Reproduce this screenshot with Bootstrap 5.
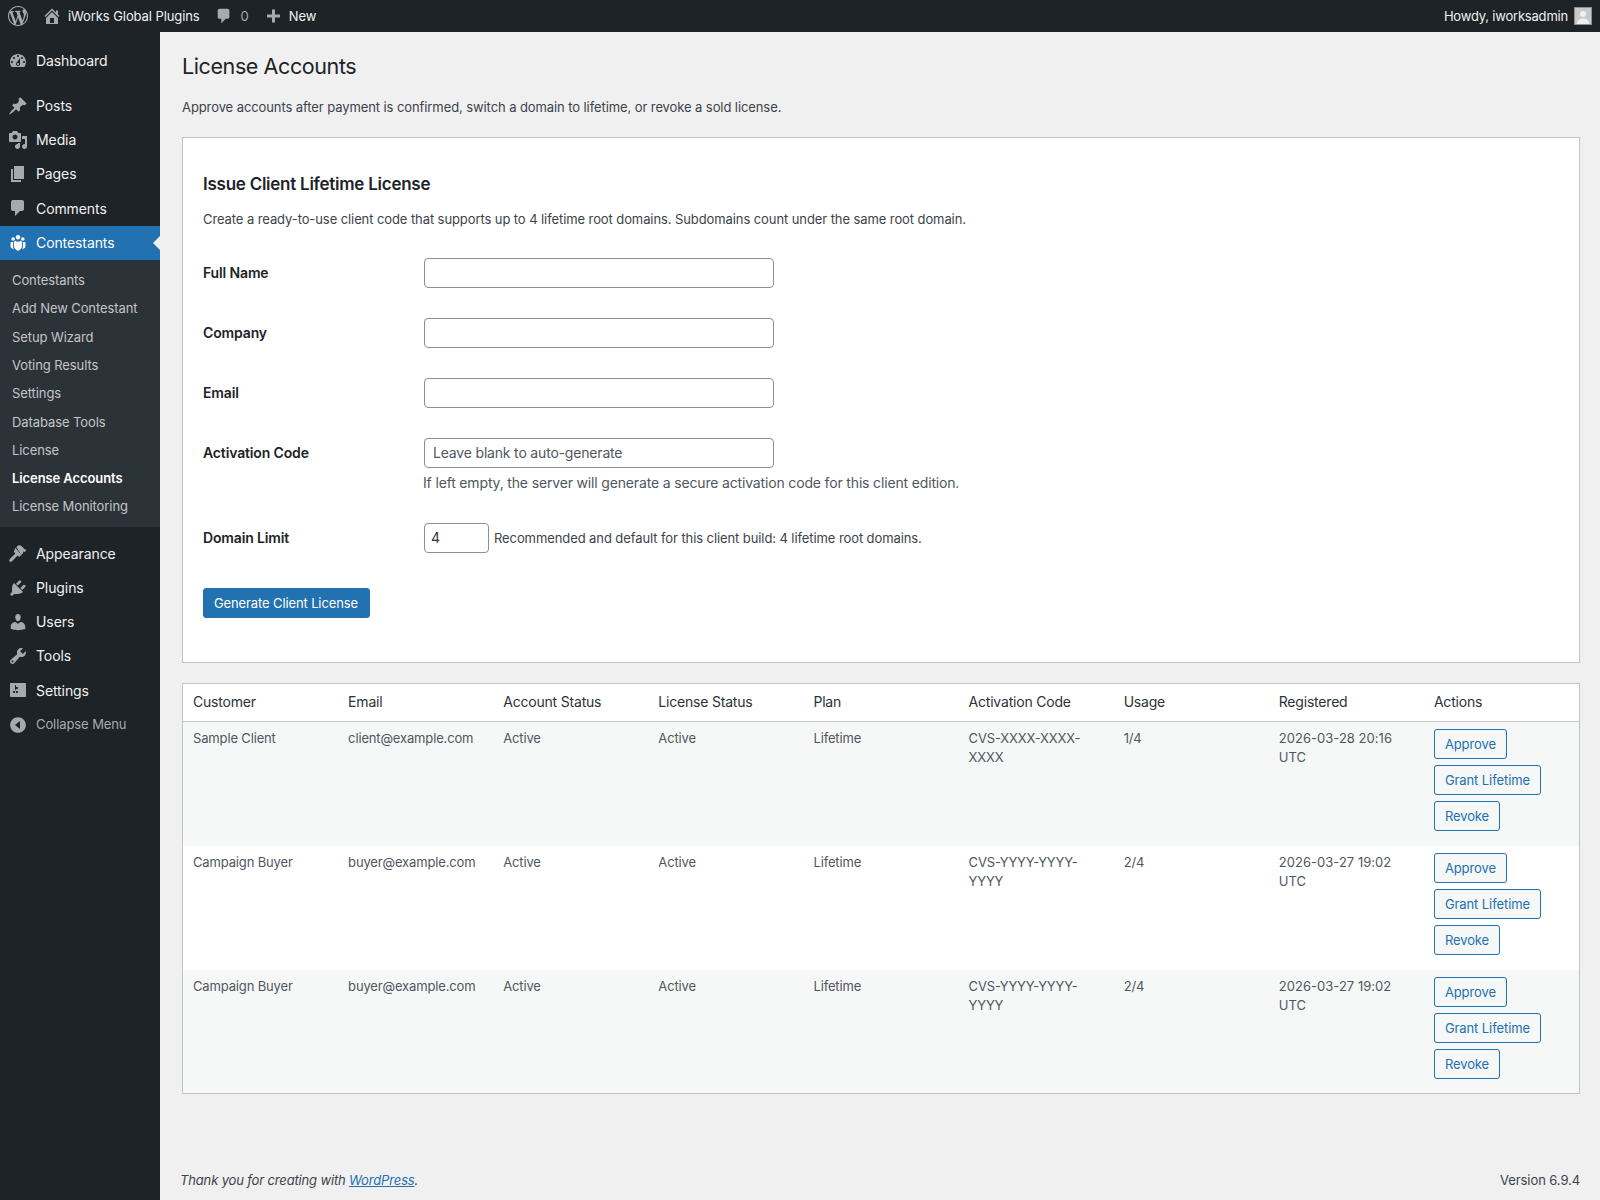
<!DOCTYPE html>
<html lang="en">
<head>
<meta charset="utf-8">
<title>License Accounts</title>
<link href="https://cdn.jsdelivr.net/npm/bootstrap@5.3.0/dist/css/bootstrap.min.css" rel="stylesheet">
<style>
body{font-family:Inter,"Liberation Sans",sans-serif;font-size:13px;line-height:1.4;color:#3c434a;background:#f0f0f1;min-height:1200px;letter-spacing:-.09px}
a{text-decoration:none}
.topbar{height:32px;background:#1d2327;color:#f0f0f1;font-size:13px}
.topbar svg{fill:#a7aaad;display:block}
.tb-muted{color:#a7aaad}
.tb-howdy{letter-spacing:-.2px}
.avatar-box{width:18px;height:18px;background:#c9c9c9;border:1px solid #8c8f94;overflow:hidden;margin:0 8px 0 6px}
.avatar-box svg{fill:#f0f0f0}
.shell{min-height:1168px}
.wpside{width:160px;flex:0 0 160px;background:#1d2327;padding-top:12px}
.wpside svg{width:20px;height:20px;fill:#a7aaad;flex:none}
.mitem{height:34.15px;padding-left:8px;gap:8px;color:#f0f0f1;font-size:14px}
.mitem-tall{height:34.3px}
.mitem-gap{margin-top:10.3px}
.mitem-current{background:#2271b1;color:#fff;position:relative}
.wpside .mitem-current svg{fill:#fff}
.mitem-current::after{content:"";position:absolute;right:0;top:10px;border:7px solid transparent;border-right-color:#f0f0f1;border-left-width:0}
.mitem-muted{color:#a7aaad;font-size:13px}
.submenu{background:#2c3338;padding:6.3px 0 6px;margin-bottom:10px}
.subitem{height:28.3px;padding-left:12px;color:#c3c4c7;font-size:13px}
.subitem-now{color:#fff;font-weight:600}
.wpmain{padding:0 20px 0 22px;min-width:0}
.page-title{font-size:21.5px;font-weight:400;color:#1d2327;line-height:28px;margin:20px 0 0;letter-spacing:-.4px}
.page-intro{margin:17px 0 0;line-height:20px}
.panel{background:#fff;border:1px solid #c3c4c7;margin-top:20px;padding:25px 20px 44px}
.panel-title{font-size:17px;font-weight:600;color:#1d2327;line-height:24px;margin:9px 0 0;letter-spacing:-.25px}
.panel-intro{margin:13px 0 0;line-height:20px}
.frow{display:flex;align-items:center;margin-top:30px;color:#1d2327}
.frow-first{margin-top:29px}
.frow-limit{margin-top:30px}
.flabel{width:221px;flex:none;font-size:14px;font-weight:600;color:#1d2327;letter-spacing:-.14px}
.finput{width:350px;height:30px;border:1px solid #8c8f94;border-radius:4px;background:#fff;padding:0 8px 2px;font-size:14px;color:#2c3338;font-family:inherit;display:block;letter-spacing:-.18px}
.finput::placeholder{color:#50575e;opacity:1}
.fhint{margin:5px 0 0 220px;font-size:14px;line-height:20px;color:#50575e;letter-spacing:-.16px}
.fnum{width:65px;height:30px;border:1px solid #8c8f94;border-radius:4px;background:#fff;padding:0 6px 1px;font-size:14px;color:#2c3338;font-family:inherit}
.fnote{margin-left:5px;color:#3c434a}
.gen-btn{background:#2271b1;border:1px solid #2271b1;color:#fff;border-radius:3px;height:30px;padding:0 11px 0 10px;font-size:13px;line-height:28px;margin-top:35px;font-family:inherit;letter-spacing:-.12px}
.acct-wrap{border:1px solid #c3c4c7;background:#fff;margin-top:20px}
.acct{table-layout:fixed;width:100%;margin:0;font-size:13px;line-height:19px;color:#50575e}
.acct th{font-size:14px;font-weight:400;color:#2c3338;padding:7px 10px 9px;line-height:21px;border-bottom:1px solid #c3c4c7;background:#fff;letter-spacing:-.2px}
.acct td{padding:7px 10px 15px;vertical-align:top;border:0;background:transparent;color:#50575e;letter-spacing:-.15px}
.acct tbody tr:last-child td{padding-bottom:14px}
.acct td.reg-cell{letter-spacing:.03px}
.acct tbody tr:nth-child(odd){background:#f6f7f7}
.act-btn{display:block;width:max-content;border:1px solid #2271b1;border-radius:3px;color:#2271b1;background:#f6f7f7;height:30px;line-height:28px;padding:0 10px;margin-bottom:6px;font-size:13px;letter-spacing:-.09px}
.acct td .act-btn:last-child{margin-bottom:0}
.wpfoot{margin-top:auto;padding-bottom:11px;margin-left:-2px}
.wpfoot a{color:#2271b1;text-decoration:underline}
.wpfoot em{color:#3c434a;letter-spacing:-.15px}
.wpfoot span{margin-left:auto}
</style>
</head>
<body>
<div class="topbar d-flex align-items-center justify-content-between">
  <div class="d-flex align-items-center">
    <svg class="ms-2" width="20" height="20" viewBox="0 0 20 20"><path fill-rule="evenodd" d="M20 10c0-5.510-4.490-10-10-10C4.480 0 0 4.490 0 10c0 5.520 4.480 10 10 10 5.510 0 10-4.480 10-10zM7.780 15.370L4.370 6.220c.55-.02 1.170-.08 1.170-.08.5-.06.44-1.130-.06-1.110 0 0-1.450.11-2.370.11-.18 0-.37 0-.58-.01C4.120 2.690 6.890 1.050 10 1.050c2.330 0 4.470.87 6.070 2.380-.68-.11-1.650.39-1.650 1.580 0 .74.450 1.360.9 2.100.35.61.55 1.360.55 2.460 0 1.490-1.400 5-1.400 5l-3.030-8.370c.54-.02.82-.17.82-.17.5-.05.44-1.250-.06-1.220 0 0-1.440.12-2.380.12-.87 0-2.330-.12-2.330-.12-.5-.03-.56 1.200-.06 1.220l.92.08 1.260 3.410zM17.410 10c.24-.64.740-1.870.43-4.250.7 1.290 1.050 2.710 1.050 4.250 0 3.290-1.730 6.240-4.400 7.780.97-2.590 1.940-5.210 2.920-7.780zM6.100 18.090C3.120 16.650 1.110 13.530 1.110 10c0-1.300.23-2.480.72-3.590C3.250 10.300 4.670 14.200 6.100 18.090zm4.030-6.630l2.580 6.980c-.86.29-1.740.45-2.710.45-.81 0-1.610-.11-2.330-.33z"/></svg>
    <svg style="margin-left:14px" width="20" height="20" viewBox="0 0 20 20"><path fill-rule="evenodd" d="M16 8.500l1.530 1.530-1.060 1.060L10 4.620l-6.470 6.470-1.060-1.060L10 2.500l4 4v-2h2v4zm-6-2.460l6 5.990V18H4v-5.970zM12 17v-5H8v5h4z"/></svg>
    <span style="margin-left:6px">iWorks Global Plugins</span>
    <svg style="margin-left:15px" width="18" height="18" viewBox="0 0 20 20"><path d="M5 2h9c1.100 0 2 .9 2 2v7c0 1.100-.9 2-2 2h-2l-5 5v-5H5c-1.100 0-2-.9-2-2V4c0-1.100.9-2 2-2z"/></svg>
    <span class="tb-muted" style="margin-left:8px">0</span>
    <svg style="margin-left:14px" width="20" height="20" viewBox="0 0 20 20"><path d="M12 8.500h5v3h-5v5H9v-5H4v-3h5v-5h3z"/></svg>
    <span style="margin-left:6px">New</span>
  </div>
  <div class="d-flex align-items-center">
    <span class="tb-howdy">Howdy, iworksadmin</span>
    <div class="avatar-box"><svg width="16" height="16" viewBox="0 0 16 16"><circle cx="8" cy="6" r="3"/><path d="M2 16c0-4 3-5.500 6-5.500s6 1.500 6 5.500z"/></svg></div>
  </div>
</div>
<div class="shell d-flex">
  <nav class="wpside">
    <div class="mitem d-flex align-items-center"><svg viewBox="0 0 20 20"><path fill-rule="evenodd" d="M3.760 16h12.480c1.100-1.370 1.760-3.110 1.760-5 0-4.420-3.580-8-8-8s-8 3.580-8 8c0 1.890.66 3.630 1.760 5zM10 4c.55 0 1 .45 1 1s-.45 1-1 1-1-.45-1-1 .45-1 1-1zM6 6c.55 0 1 .45 1 1s-.45 1-1 1-1-.45-1-1 .45-1 1-1zm8 0c.55 0 1 .45 1 1s-.45 1-1 1-1-.45-1-1 .45-1 1-1zm-5.370 5.550L12 7v6c0 1.100-.9 2-2 2s-2-.9-2-2c0-.57.24-1.080.63-1.450zM4 10c.55 0 1 .45 1 1s-.45 1-1 1-1-.45-1-1 .45-1 1-1zm12 0c.55 0 1 .45 1 1s-.45 1-1 1-1-.45-1-1 .45-1 1-1zm-5 3c0-.55-.45-1-1-1s-1 .45-1 1 .45 1 1 1 1-.45 1-1z"/></svg>Dashboard</div>
    <div class="mitem mitem-tall mitem-gap d-flex align-items-center"><svg viewBox="0 0 20 20"><path d="M10.440 3.020l1.820-1.820 6.360 6.350-1.830 1.820c-1.050-.68-2.480-.57-3.410.36l-.75.75c-.92.93-1.040 2.350-.35 3.410l-1.830 1.820-2.410-2.410-2.800 2.790c-.42.42-3.380 2.710-3.800 2.290s1.860-3.390 2.280-3.810l2.790-2.790L4.100 9.360l1.830-1.820c1.050.69 2.480.57 3.400-.36l.75-.75c.93-.92 1.050-2.350.36-3.410z"/></svg>Posts</div>
    <div class="mitem mitem-tall d-flex align-items-center"><svg viewBox="0 0 20 20"><path fill-rule="evenodd" d="M13 11V4c0-.55-.45-1-1-1h-1.670L9 1H5L3.670 3H2c-.55 0-1 .45-1 1v7c0 .55.45 1 1 1h10c.55 0 1-.45 1-1zM7 4.500c1.380 0 2.500 1.120 2.500 2.500S8.380 9.500 7 9.500 4.500 8.380 4.500 7 5.620 4.500 7 4.500zM14 6h5v10.500c0 1.380-1.120 2.500-2.500 2.500S14 17.880 14 16.500s1.120-2.500 2.500-2.500c.17 0 .34.020.5.050V9h-3V6zm-4 8.050V13h2v3.500c0 1.380-1.120 2.500-2.500 2.500S7 17.880 7 16.500 8.120 14 9.500 14c.17 0 .34.020.5.050z"/></svg>Media</div>
    <div class="mitem mitem-tall d-flex align-items-center"><svg viewBox="0 0 20 20"><path d="M6 15V2h10v13H6zm-1 1h8v2H3V5h2v11z"/></svg>Pages</div>
    <div class="mitem mitem-tall d-flex align-items-center"><svg viewBox="0 0 20 20"><path d="M5 2h9c1.100 0 2 .9 2 2v7c0 1.100-.9 2-2 2h-2l-5 5v-5H5c-1.100 0-2-.9-2-2V4c0-1.100.9-2 2-2z"/></svg>Comments</div>
    <div class="mitem mitem-current d-flex align-items-center"><svg viewBox="0 0 20 20"><circle cx="10" cy="4.300" r="2.200"/><circle cx="5.200" cy="6" r="1.800"/><circle cx="14.800" cy="6" r="1.800"/><path d="M7.300 7.800c.8.600 1.700 1 2.700 1s1.900-.4 2.700-1c.9.300 1.300 1.100 1.300 2v3.700c0 1.500-2 3.500-4 4.500-2-1-4-3-4-4.500V9.800c0-.9.400-1.700 1.300-2z"/><path d="M3.500 9h1.600v5c0 .8.300 1.500.8 2.200-2-.4-3.400-1.500-3.400-2.900v-3c0-.7.200-1.300 1-1.300zM16.500 9h-1.600v5c0 .8-.3 1.500-.8 2.200 2-.4 3.400-1.500 3.400-2.900v-3c0-.7-.2-1.300-1-1.300z"/></svg>Contestants</div>
    <div class="submenu">
      <div class="subitem d-flex align-items-center">Contestants</div>
      <div class="subitem d-flex align-items-center">Add New Contestant</div>
      <div class="subitem d-flex align-items-center">Setup Wizard</div>
      <div class="subitem d-flex align-items-center">Voting Results</div>
      <div class="subitem d-flex align-items-center">Settings</div>
      <div class="subitem d-flex align-items-center">Database Tools</div>
      <div class="subitem d-flex align-items-center">License</div>
      <div class="subitem subitem-now d-flex align-items-center">License Accounts</div>
      <div class="subitem d-flex align-items-center">License Monitoring</div>
    </div>
    <div class="mitem d-flex align-items-center"><svg viewBox="0 0 20 20"><path d="M8.300 3l1.600-1.300c1.100-.8 2.700-.5 3.800.5 1.400 1.300 2.300 3 4.800 3.800l-2.200 2.200-1.500-1 .4 1.800-1.900 1.900z"/><path d="M7.400 3.800l6 7.200-2.300 1.900-1.500-1.300-5.300 5.400c-.9.900-2.100 1.100-2.700.5s-.4-1.800.5-2.700l5.200-5.400-1.500-1.600z"/></svg>Appearance</div>
    <div class="mitem d-flex align-items-center"><svg viewBox="0 0 20 20"><path d="M13.110 4.360L9.870 7.600 8 5.730l3.240-3.240c.35-.34 1.050-.2 1.560.32.520.51.660 1.210.31 1.550zm-8 1.770l.91-1.120 9.010 9.010-1.190.84c-.71.710-2.630 1.160-3.820 1.160H6.140L4.900 17.260c-.59.590-1.540.59-2.120 0-.59-.58-.59-1.530 0-2.120l1.240-1.240v-3.880c0-1.130.4-3.190 1.090-3.890zm7.260 3.970l3.240-3.240c.34-.35 1.040-.21 1.550.31.520.51.660 1.210.31 1.550l-3.240 3.250z"/></svg>Plugins</div>
    <div class="mitem d-flex align-items-center"><svg viewBox="0 0 20 20"><path d="M10 9.250c-2.270 0-2.730-3.440-2.730-3.440C7 4.020 7.820 2 9.970 2c2.160 0 2.980 2.020 2.710 3.810 0 0-.41 3.440-2.680 3.440zm0 2.570L12.720 10c2.390 0 4.520 2.330 4.520 4.530v2.490s-3.650 1.130-7.240 1.130c-3.650 0-7.240-1.130-7.240-1.130v-2.490c0-2.250 1.940-4.480 4.470-4.480z"/></svg>Users</div>
    <div class="mitem d-flex align-items-center"><svg viewBox="0 0 20 20"><path fill-rule="evenodd" d="M16.680 9.770c-1.340 1.340-3.300 1.670-4.950.99l-5.410 6.520c-.99.99-2.590.99-3.580 0s-.99-2.590 0-3.570l6.520-5.420c-.68-1.650-.35-3.610.99-4.950 1.280-1.280 3.120-1.620 4.720-1.060l-2.890 2.890 2.820 2.820 2.860-2.870c.53 1.580.18 3.410-1.080 4.650zM3.810 16.210c.4.390 1.040.39 1.430 0 .4-.4.400-1.040 0-1.430-.39-.4-1.030-.4-1.430 0-.39.390-.39 1.030 0 1.430z"/></svg>Tools</div>
    <div class="mitem d-flex align-items-center"><svg viewBox="0 0 20 20"><path fill-rule="evenodd" d="M18 16V4c0-.55-.45-1-1-1H3c-.55 0-1 .45-1 1v12c0 .55.45 1 1 1h14c.55 0 1-.45 1-1zM8 11h1c.55 0 1 .45 1 1s-.45 1-1 1H8v1.500c0 .28-.22.5-.5.5s-.5-.22-.5-.5V13H6c-.55 0-1-.45-1-1s.45-1 1-1h1V5.500c0-.28.22-.5.5-.5s.5.22.5.5V7h1c.55 0 1 .45 1 1s-.45 1-1 1h-1v5.500c0 .28-.22.5-.5.5s-.5-.22-.5-.5V9z"/></svg>Settings</div>
    <div class="mitem mitem-muted d-flex align-items-center"><svg viewBox="0 0 20 20"><path fill-rule="evenodd" d="M10 2.160c4.330 0 7.840 3.510 7.840 7.840s-3.510 7.840-7.840 7.840S2.160 14.330 2.160 10 5.670 2.160 10 2.160zM12 14V6l-5 4z"/></svg>Collapse Menu</div>
  </nav>
  <main class="wpmain flex-grow-1 d-flex flex-column">
    <h1 class="page-title">License Accounts</h1>
    <p class="page-intro">Approve accounts after payment is confirmed, switch a domain to lifetime, or revoke a sold license.</p>
    <section class="panel">
      <h2 class="panel-title">Issue Client Lifetime License</h2>
      <p class="panel-intro">Create a ready-to-use client code that supports up to 4 lifetime root domains. Subdomains count under the same root domain.</p>
      <div class="frow frow-first"><label class="flabel">Full Name</label><input class="finput" type="text"></div>
      <div class="frow"><label class="flabel">Company</label><input class="finput" type="text"></div>
      <div class="frow"><label class="flabel">Email</label><input class="finput" type="text"></div>
      <div class="frow"><label class="flabel">Activation Code</label><input class="finput" type="text" placeholder="Leave blank to auto-generate"></div>
      <p class="fhint">If left empty, the server will generate a secure activation code for this client edition.</p>
      <div class="frow frow-limit"><label class="flabel">Domain Limit</label><input class="fnum" type="number" value="4"><span class="fnote">Recommended and default for this client build: 4 lifetime root domains.</span></div>
      <button class="gen-btn" type="button">Generate Client License</button>
    </section>
    <div class="acct-wrap">
      <table class="acct">
        <thead><tr><th>Customer</th><th>Email</th><th>Account Status</th><th>License Status</th><th>Plan</th><th>Activation Code</th><th>Usage</th><th>Registered</th><th>Actions</th></tr></thead>
        <tbody>
          <tr><td>Sample Client</td><td>client@example.com</td><td>Active</td><td>Active</td><td>Lifetime</td><td>CVS-XXXX-XXXX-XXXX</td><td>1/4</td><td class="reg-cell">2026-03-28 20:16 UTC</td><td><a class="act-btn">Approve</a><a class="act-btn">Grant Lifetime</a><a class="act-btn">Revoke</a></td></tr>
          <tr><td>Campaign Buyer</td><td>buyer@example.com</td><td>Active</td><td>Active</td><td>Lifetime</td><td>CVS-YYYY-YYYY-YYYY</td><td>2/4</td><td class="reg-cell">2026-03-27 19:02 UTC</td><td><a class="act-btn">Approve</a><a class="act-btn">Grant Lifetime</a><a class="act-btn">Revoke</a></td></tr>
          <tr><td>Campaign Buyer</td><td>buyer@example.com</td><td>Active</td><td>Active</td><td>Lifetime</td><td>CVS-YYYY-YYYY-YYYY</td><td>2/4</td><td class="reg-cell">2026-03-27 19:02 UTC</td><td><a class="act-btn">Approve</a><a class="act-btn">Grant Lifetime</a><a class="act-btn">Revoke</a></td></tr>
        </tbody>
      </table>
    </div>
    <footer class="wpfoot d-flex">
      <em>Thank you for creating with <a href="#">WordPress</a>.</em>
      <span>Version 6.9.4</span>
    </footer>
  </main>
</div>
<script src="https://cdn.jsdelivr.net/npm/bootstrap@5.3.0/dist/js/bootstrap.bundle.min.js"></script>
</body>
</html>
